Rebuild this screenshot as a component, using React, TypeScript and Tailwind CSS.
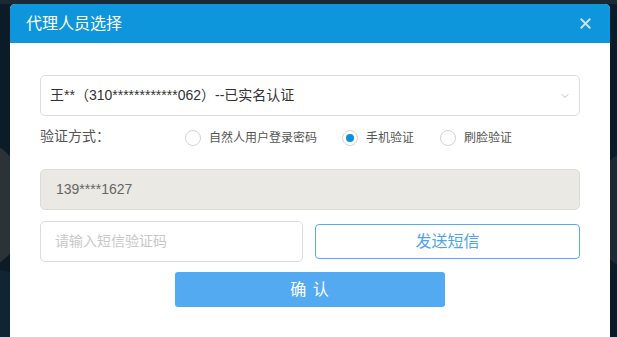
import { X, ChevronDown } from "lucide-react";

const font = { fontFamily: '"Liberation Sans", "Noto Sans CJK SC", sans-serif' };

function Radio({ label, checked }: { label: string; checked?: boolean }) {
  return (
    <label className="flex items-center gap-[8px] text-[12px] text-[#555]">
      <span className="flex h-[16px] w-[16px] items-center justify-center rounded-full border border-[#d4d4d4] bg-white">
        {checked && <span className="h-[8px] w-[8px] rounded-full bg-[#0e8fdc]" />}
      </span>
      {label}
    </label>
  );
}

export default function App() {
  return (
    <div
      className="relative h-[337px] w-[617px] overflow-hidden bg-[#0b1b28]"
      style={font}
    >
      {/* background shapes */}
      <div className="absolute left-0 top-0 h-[4px] w-full bg-[#1a2a35]" />
      <div className="absolute -left-[70px] top-[140px] h-[130px] w-[90px] rounded-full bg-[#2c3337]" />
      <div className="absolute -right-[60px] top-[150px] h-[120px] w-[80px] rounded-full bg-[#1e2a33]" />
      <div className="absolute -left-[20px] top-[270px] h-[80px] w-[40px] rounded-full bg-[#112433]" />

      {/* modal */}
      <div className="relative ml-[10px] mt-[4px] h-[340px] w-[600px] overflow-hidden rounded-[5px] bg-white">
        <div className="flex h-[39px] items-center justify-between bg-[#0e96dc] pl-[16px] pr-[16px]">
          <span className="text-[16px] text-white">代理人员选择</span>
          <X size={17} strokeWidth={2.6} className="text-[#cfe0ec]" />
        </div>

        <div className="px-[30px] pt-[32px]">
          {/* agent select */}
          <div className="flex h-[41px] items-center justify-between rounded-[5px] border border-[#dcdcdc] pl-[9px] pr-[8px]">
            <span className="text-[14px] text-[#333]">王**（310************062）--已实名认证</span>
            <ChevronDown size={12} strokeWidth={1.5} className="text-[#a0a8b8]" />
          </div>

          {/* verification method */}
          <div className="mt-[10px] flex h-[24px] items-center">
            <span className="-mt-[4px] w-[145px] text-[14px] text-[#555]">验证方式：</span>
            <div className="flex items-center">
              <Radio label="自然人用户登录密码" />
              <div className="w-[25px]" />
              <Radio label="手机验证" checked />
              <div className="w-[26px]" />
              <Radio label="刷脸验证" />
            </div>
          </div>

          {/* phone */}
          <div className="mt-[19px] flex h-[41px] items-center rounded-[5px] border border-[#dcdcd6] bg-[#eae9e3] pl-[15px] text-[14px] text-[#666]">
            139****1627
          </div>

          {/* sms code */}
          <div className="mt-[11px] flex items-center gap-[12px]">
            <div className="flex h-[41px] w-[263px] items-center rounded-[5px] border border-[#dcdcdc] pl-[14px] text-[14px] text-[#c8c8c8]">
              请输入短信验证码
            </div>
            <button className="flex h-[35px] flex-1 items-center justify-center rounded-[4px] border border-[#5aa9ee] bg-white text-[16px] text-[#4fa3ea]">
              发送短信
            </button>
          </div>

          {/* confirm */}
          <div className="mt-[10px] flex justify-center">
            <button className="flex h-[35px] w-[270px] items-center justify-center rounded-[3px] bg-[#53aaf1] text-[16px] tracking-[1px] text-white">
              确 认
            </button>
          </div>
        </div>
      </div>
    </div>
  );
}
